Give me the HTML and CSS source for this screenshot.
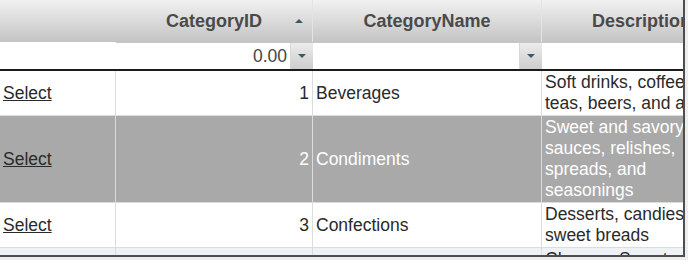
FILE: index.html
```html
<!DOCTYPE html>
<html lang="en">
<head>
    <meta charset="UTF-8">
    <title>Categories</title>
    <link rel="stylesheet" href="styles.css">
</head>
<body>

    <div class="frame">
        <table class="grid">
            <colgroup>
                <col class="col-select">
                <col class="col-id">
                <col class="col-name">
                <col class="col-desc">
            </colgroup>
            <thead>
                <tr class="head-row">
                    <th class="head-blank"></th>
                    <th class="sorted">CategoryID<span class="sort-up"></span></th>
                    <th>CategoryName</th>
                    <th>Description</th>
                </tr>
                <tr class="filter-row">
                    <td class="filter-blank"></td>
                    <td>
                        <div class="filter">
                            <span class="filter-value num">0.00</span>
                            <span class="filter-btn"><span class="tri-down"></span></span>
                        </div>
                    </td>
                    <td>
                        <div class="filter">
                            <span class="filter-value"></span>
                            <span class="filter-btn"><span class="tri-down"></span></span>
                        </div>
                    </td>
                    <td></td>
                </tr>
            </thead>
            <tbody>
                <tr>
                    <td><a href="#">Select</a></td>
                    <td class="num">1</td>
                    <td>Beverages</td>
                    <td>Soft drinks, coffees, teas, beers, and ales</td>
                </tr>
                <tr class="selected">
                    <td><a href="#">Select</a></td>
                    <td class="num">2</td>
                    <td>Condiments</td>
                    <td>Sweet and savory sauces, relishes, spreads, and seasonings</td>
                </tr>
                <tr>
                    <td><a href="#">Select</a></td>
                    <td class="num">3</td>
                    <td>Confections</td>
                    <td>Desserts, candies, and sweet breads</td>
                </tr>
                <tr class="alt">
                    <td><a href="#">Select</a></td>
                    <td class="num">4</td>
                    <td>Dairy Products</td>
                    <td>Cheeses Sweet and tasty</td>
                </tr>
            </tbody>
        </table>
    </div>

</body>
</html>
```

FILE: styles.css
```css
body {
    margin: 0;
    background-color: #eeeeee;
    font-family: 'Liberation Sans', Arial, sans-serif;
}
.frame {
    width: 683px;
    height: 255px;
    overflow: hidden;
    background-color: #ffffff;
    border-right: 2px solid #4e4e4e;
    border-bottom: 2px solid #4e4e4e;
}
.grid {
    table-layout: fixed;
    width: 742px;
    border-collapse: separate;
    border-spacing: 0;
    font-size: 17.5px;
    line-height: 21px;
    color: #2a2a2a;
}
.col-select { width: 116px; }
.col-id { width: 197px; }
.col-name { width: 229px; }
.col-desc { width: 200px; }
.grid th,
.grid td {
    box-sizing: border-box;
    padding: 1px 3px;
    vertical-align: middle;
    text-align: left;
}
.head-row th {
    position: relative;
    height: 42px;
    padding: 0;
    font-size: 18px;
    font-weight: bold;
    text-align: center;
    color: #4a4a4a;
    background: linear-gradient(#f1f1f1, #c4c4c4);
    border-right: 1px solid #e4e4e4;
}
.head-row th.head-blank {
    border-right: none;
}
.sort-up {
    position: absolute;
    right: 9px;
    top: 19px;
    width: 0;
    height: 0;
    border-left: 4px solid transparent;
    border-right: 4px solid transparent;
    border-bottom: 4px solid #3e5865;
}
.filter-row td {
    height: 28px;
    padding: 0;
    border-top: 1px solid #c6c6c6;
    border-bottom: 2px solid #1c1c1c;
    background-color: #ffffff;
}
.filter-row td.filter-blank {
    border-top: none;
}
.filter {
    display: flex;
    align-items: stretch;
    height: 26px;
}
.filter-value {
    flex: 1;
    display: flex;
    align-items: center;
    justify-content: flex-end;
    padding-right: 3px;
    color: #444444;
}
.filter-btn {
    width: 22px;
    display: flex;
    align-items: center;
    justify-content: center;
    background: linear-gradient(#ececec, #cdcdcd);
    border-left: 1px solid #d8d8d8;
}
.tri-down {
    width: 0;
    height: 0;
    border-left: 4px solid transparent;
    border-right: 4px solid transparent;
    border-top: 4px solid #3e5865;
}
tbody td {
    border-right: 1px solid #dcdcdc;
    border-bottom: 1px solid #dcdcdc;
}
tbody td.num {
    text-align: right;
}
.grid a {
    color: #2a2a2a;
}
tr.selected td {
    background-color: #a9a9a9;
    color: #ffffff;
}
tr.selected a {
    color: #2a2a2a;
}
tr.alt td {
    background-color: #eef2f6;
}
```
